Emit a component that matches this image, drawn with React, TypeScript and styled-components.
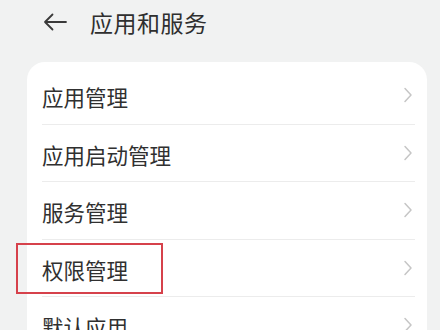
import React from 'react';
import styled, { createGlobalStyle } from 'styled-components';

const GlobalStyle = createGlobalStyle`
  html, body {
    margin: 0;
    padding: 0;
    background: #f1f2f2;
  }
  body {
    font-family: "Noto Sans CJK SC", "Noto Sans", sans-serif;
    color: #303030;
  }
`;

const Page = styled.div`
  width: 440px;
  height: 330px;
  overflow: hidden;
  background: #f1f2f2;
`;

const Header = styled.div`
  display: flex;
  align-items: center;
  height: 44px;
  padding-left: 43px;
  gap: 23px;
`;

const Title = styled.span`
  font-size: 23px;
  line-height: 1;
  color: #2f2f2f;
  letter-spacing: 0.5px;
`;

const Card = styled.div`
  margin: 18px 0 0 27px;
  width: 400px;
  background: #ffffff;
  border-radius: 18px;
  padding-top: 5px;
`;

const Row = styled.div<{ $last?: boolean }>`
  position: relative;
  display: flex;
  align-items: center;
  justify-content: space-between;
  margin-left: 15px;
  margin-right: 12px;
  height: 56.5px;
  border-bottom: ${(p) => (p.$last ? 'none' : '1px solid #ececec')};
`;

const Label = styled.span`
  font-size: 21.5px;
  line-height: 1;
  color: #303030;
  padding-top: 3px;
`;

const Highlight = styled.div`
  position: absolute;
  left: -26px;
  top: 3px;
  width: 147px;
  height: 51px;
  box-sizing: border-box;
  border: 2px solid #d6414b;
  pointer-events: none;
`;

const Chevron = () => (
  <svg width="10" height="16" viewBox="0 0 10 16" style={{ marginRight: 2 }}>
    <path d="M2 1.5 L8 8 L2 14.5" fill="none" stroke="#c6c6c6" strokeWidth="1.5" strokeLinecap="round" strokeLinejoin="round" />
  </svg>
);

const BackArrow = () => (
  <svg width="24" height="18" viewBox="0 0 24 18">
    <path d="M23 9 H2 M9.5 1.5 L2 9 L9.5 16.5" fill="none" stroke="#3a3a3a" strokeWidth="1.8" strokeLinecap="round" strokeLinejoin="round" />
  </svg>
);

const items = ['应用管理', '应用启动管理', '服务管理', '权限管理', '默认应用'];

export default function App() {
  return (
    <>
      <GlobalStyle />
      <Page>
        <Header>
          <BackArrow />
          <Title>应用和服务</Title>
        </Header>
        <Card>
          {items.map((label, i) => (
            <Row key={label} $last={i === items.length - 1}>
              {label === '权限管理' ? <Highlight /> : null}
              <Label>{label}</Label>
              <Chevron />
            </Row>
          ))}
        </Card>
      </Page>
    </>
  );
}
